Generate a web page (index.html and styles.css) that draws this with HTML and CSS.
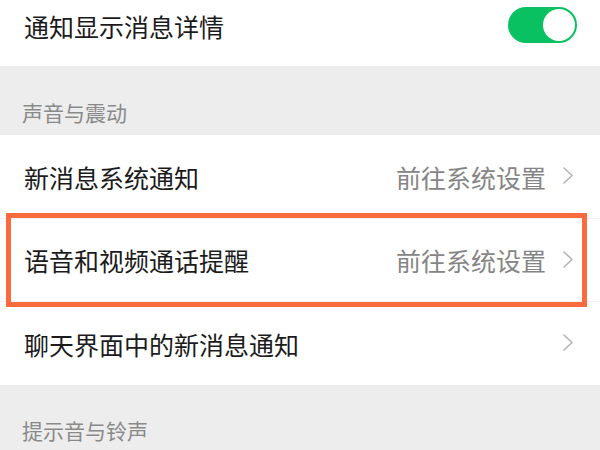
FILE: index.html
```html
<!DOCTYPE html>
<html lang="zh-CN">
<head>
<meta charset="utf-8">
<link rel="stylesheet" href="styles.css">
</head>
<body>
<div class="page">
  <div class="row row-first">
    <span class="label">通知显示消息详情</span>
    <span class="toggle"><span class="knob"></span></span>
  </div>
  <div class="section">声音与震动</div>
  <div class="row row-a">
    <span class="label">新消息系统通知</span>
    <span class="right"><span class="value">前往系统设置</span><svg class="chev" width="10" height="17" viewBox="0 0 10 17"><polyline points="1,1 9,8.5 1,16" fill="none" stroke="#b4b4b4" stroke-width="1.6" stroke-linecap="round" stroke-linejoin="round"/></svg></span>
  </div>
  <div class="row row-b">
    <span class="label">语音和视频通话提醒</span>
    <span class="right"><span class="value">前往系统设置</span><svg class="chev" width="10" height="17" viewBox="0 0 10 17"><polyline points="1,1 9,8.5 1,16" fill="none" stroke="#b4b4b4" stroke-width="1.6" stroke-linecap="round" stroke-linejoin="round"/></svg></span>
  </div>
  <div class="row row-c">
    <span class="label">聊天界面中的新消息通知</span>
    <span class="right"><svg class="chev" width="10" height="17" viewBox="0 0 10 17"><polyline points="1,1 9,8.5 1,16" fill="none" stroke="#b4b4b4" stroke-width="1.6" stroke-linecap="round" stroke-linejoin="round"/></svg></span>
  </div>
  <div class="section section-last">提示音与铃声</div>
  <div class="highlight"></div>
</div>
</body>
</html>
```
FILE: styles.css
```css
html, body {
  margin: 0;
  padding: 0;
  background: #ffffff;
}
body {
  width: 600px;
  height: 450px;
  overflow: hidden;
  font-family: "Noto Sans CJK SC", "Noto Sans", sans-serif;
}
.page {
  position: relative;
  width: 600px;
}
.row {
  display: flex;
  align-items: center;
  justify-content: space-between;
  box-sizing: border-box;
  padding: 0 27px 0 24px;
  background: #ffffff;
}
.row-first {
  height: 66px;
  padding-bottom: 14px;
  padding-right: 23px;
}
.row-a {
  height: 84px;
  border-bottom: 1px solid #f3f3f3;
}
.row-b {
  height: 83px;
  border-bottom: 1px solid #f3f3f3;
}
.row-c {
  height: 83px;
}
.label {
  font-size: 25px;
  line-height: 30px;
  color: #1b1b1b;
}
.right {
  display: flex;
  align-items: center;
  gap: 17px;
}
.value {
  font-size: 25px;
  line-height: 30px;
  color: #858585;
}
.chev {
  display: block;
  margin-top: -2px;
}
.toggle {
  display: flex;
  justify-content: flex-end;
  align-items: center;
  box-sizing: border-box;
  width: 69px;
  height: 36px;
  padding: 2px;
  border-radius: 18px;
  background: #0ac161;
  margin-top: -2px;
}
.knob {
  width: 32px;
  height: 32px;
  border-radius: 50%;
  background: #ffffff;
}
.section {
  box-sizing: border-box;
  height: 69px;
  padding: 34px 0 0 22px;
  background: #ededed;
  font-size: 21px;
  line-height: 24px;
  color: #8a8a8a;
}
.section-last {
  height: 80px;
  padding-top: 33px;
}
.highlight {
  position: absolute;
  left: 6px;
  top: 213px;
  width: 581px;
  height: 94px;
  box-sizing: border-box;
  border: 5px solid #fa6c3e;
}
```
